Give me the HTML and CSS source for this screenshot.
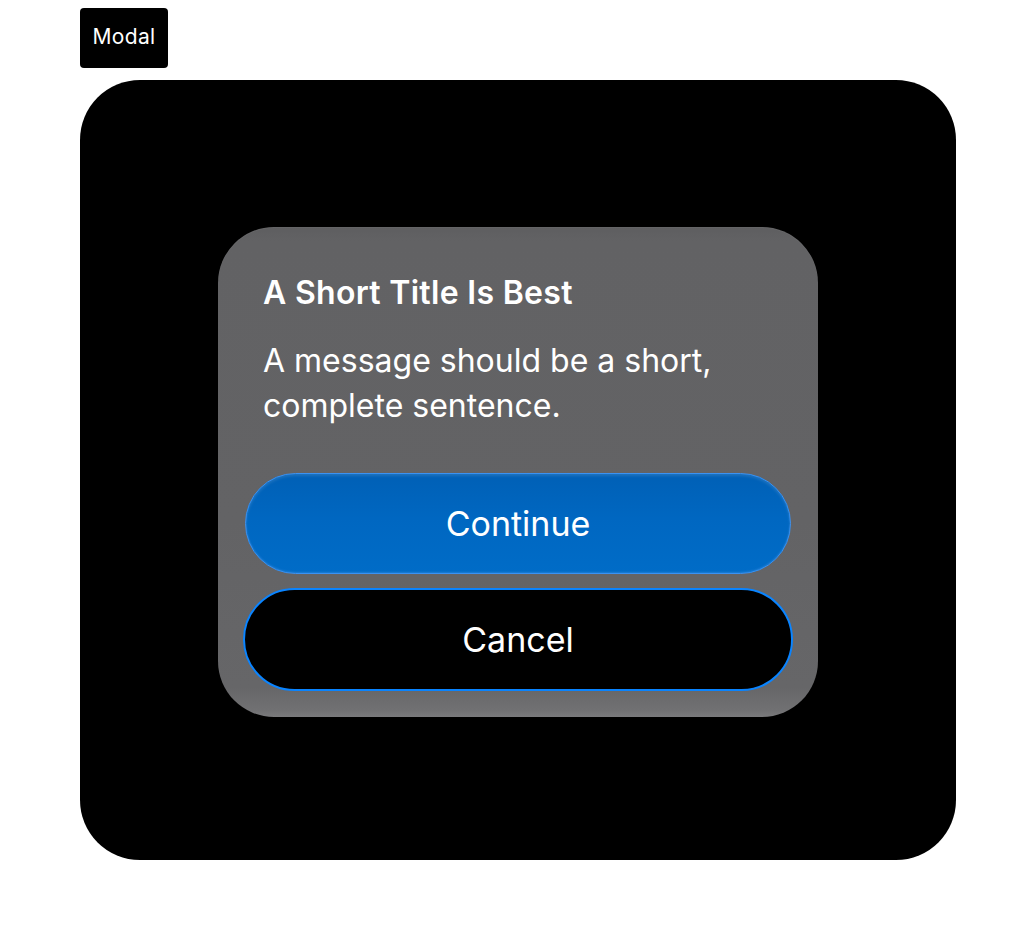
FILE: index.html
```html
<!DOCTYPE html>
<html lang="en">
<head>
<meta charset="utf-8">
<title>Modal</title>
<link rel="stylesheet" href="styles.css">
</head>
<body>
  <div class="page">
    <div class="tag">Modal</div>
    <div class="stage">
      <div class="alert" role="alertdialog" aria-labelledby="alert-title">
        <div class="alert-body">
          <h2 class="alert-title" id="alert-title">A Short Title Is Best</h2>
          <p class="alert-message">A message should be a short, complete sentence.</p>
        </div>
        <div class="alert-actions">
          <button class="btn btn-primary" type="button">Continue</button>
          <button class="btn btn-secondary" type="button">Cancel</button>
        </div>
      </div>
    </div>
  </div>
</body>
</html>
```
FILE: styles.css
```css
html, body {
  margin: 0;
  padding: 0;
  background: #ffffff;
}

body {
  font-family: Inter, "Noto Sans", "DejaVu Sans", sans-serif;
  -webkit-font-smoothing: antialiased;
}

.page {
  padding: 8px 80px;
  display: flex;
  flex-direction: column;
  align-items: flex-start;
  gap: 12px;
}

.tag {
  height: 60px;
  width: 88px;
  box-sizing: border-box;
  background: #000;
  color: #fff;
  border-radius: 4px;
  font-size: 21px;
  letter-spacing: 0.3px;
  display: flex;
  align-items: center;
  justify-content: center;
  padding-bottom: 4px;
}

.stage {
  width: 876px;
  height: 780px;
  background: #000;
  border-radius: 60px;
  display: flex;
  align-items: center;
  justify-content: center;
}

/* alert card: flat grey with a soft lighter rim at the bottom */
.alert {
  width: 600px;
  box-sizing: border-box;
  margin-top: 4px;
  border-radius: 56px;
  background: linear-gradient(180deg, #5e5e60 0px, #626264 14px, #636365 60%, #666668 calc(100% - 30px), #717173 calc(100% - 6px), #7a7a7c 100%);
  box-shadow: inset 0 1px 1px rgba(255, 255, 255, 0.05);
  padding: 47px 25px 26px;
  display: flex;
  flex-direction: column;
  color: #fff;
}

.alert-body {
  padding: 0 20px;
}

.alert-title {
  margin: 0;
  font-size: 32px;
  line-height: 38px;
  font-weight: 600;
  letter-spacing: 0.3px;
}

.alert-message {
  margin: 26px 0 0;
  font-size: 32px;
  line-height: 45px;
  font-weight: 400;
  max-width: 490px;
}

.alert-actions {
  margin-top: 45px;
  display: flex;
  flex-direction: column;
  align-items: center;
  gap: 14px;
}

.btn {
  font-family: inherit;
  font-size: 34px;
  color: #fff;
  border-radius: 999px;
  cursor: pointer;
  display: flex;
  align-items: center;
  justify-content: center;
  padding: 0;
}

.btn-primary {
  width: 546px;
  height: 101px;
  border: 1px solid #3b92f2;
  background: linear-gradient(180deg, #0060b6 0%, #0067c1 45%, #006cc7 100%);
  box-shadow: inset 0 2px 3px rgba(255, 255, 255, 0.12), inset 0 -1px 2px rgba(120, 180, 255, 0.25);
}

.btn-secondary {
  width: 550px;
  height: 103px;
  border: 2px solid #0a84ff;
  background: #000;
}
```
